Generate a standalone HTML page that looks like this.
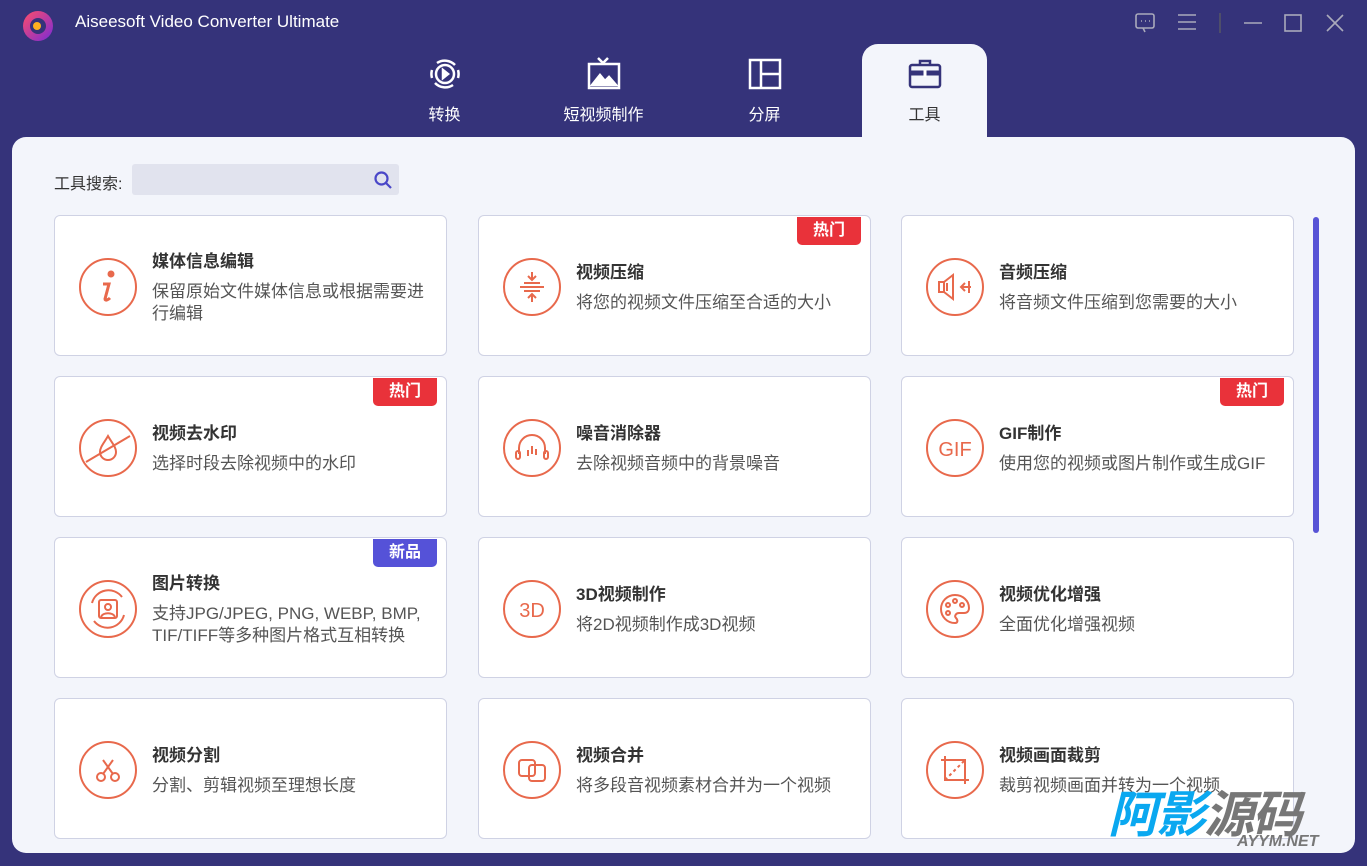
<!DOCTYPE html>
<html><head><meta charset="utf-8"><style>
*{margin:0;padding:0;box-sizing:border-box}
body{width:1367px;height:866px;background:#35337a;font-family:"Liberation Sans","Noto Sans CJK SC",sans-serif;position:relative;overflow:hidden}
.a{position:absolute}
.title{left:75px;top:12px;color:#fff;font-size:17px}
.tab{position:absolute;top:56px;width:125px;text-align:center;color:#fff;font-size:16px}
.tab svg{display:block;margin:0 auto 9px}
.panel{left:12px;top:137px;width:1343px;height:716px;background:#f3f5fb;border-radius:14px}
.acttab{left:862px;top:44px;width:125px;height:100px;background:#f3f5fb;border-radius:16px 16px 0 0}
.card{position:absolute;width:393px;height:141px;background:#fff;border:1px solid #cfd2e4;border-radius:6px}
.card svg.ic{position:absolute;left:23px;top:41px}
.txt{position:absolute;left:97px;right:18px;top:0;bottom:0;display:flex;flex-direction:column;justify-content:center}
.txt b{font-size:17px;color:#333;font-weight:bold;margin-bottom:9px}
.txt span{font-size:17px;color:#555;line-height:22px}
.badge{position:absolute;right:9px;top:1px;width:64px;height:28px;border-radius:0 0 5px 5px;color:#fff;font-weight:bold;font-size:16px;text-align:center;line-height:28px}
.hot{background:#e9323a}.new{background:#5552d8}
</style></head><body>
<svg class="a" style="left:20px;top:8px" width="36" height="36" viewBox="0 0 36 36"><defs><linearGradient id="lg" x1="0" y1="0" x2="1" y2="1"><stop offset="0" stop-color="#ff4d6a"/><stop offset="1" stop-color="#7a2bd6"/></linearGradient></defs><circle cx="18" cy="18" r="15" fill="url(#lg)"/><circle cx="18" cy="18" r="8" fill="#35337a"/><circle cx="17" cy="18" r="4" fill="#ffb020"/></svg>
<div class="a title">Aiseesoft Video Converter Ultimate</div>
<svg class="a" style="left:1134px;top:12px" width="220" height="22" viewBox="0 0 220 22" fill="none" stroke="#aab" stroke-width="1.6"><rect x="2" y="2" width="18" height="14" rx="2"/><path d="M7 9h1M11 9h1M15 9h1M9 16l2 4"/><path d="M44 3h18M44 10h18M44 17h18"/><path d="M86 1v20" stroke="#556"/><path d="M110 11h18"/><rect x="151" y="3" width="16" height="16"/><path d="M193 3l16 16M209 3l-16 16"/></svg>
<div class="a acttab"></div>
<div class="a panel"></div>
<div class="tab" style="left:382px"><svg width="36" height="36" viewBox="0 0 36 36" fill="none" stroke="#fff" stroke-width="2.5"><path d="M10 7a14 14 0 0 1 18 2M26 29a14 14 0 0 1-18-2M5 14a14 14 0 0 0 0 8M31 14a14 14 0 0 1 0 8"/><circle cx="18" cy="18" r="9"/><path d="M16 14l5 4-5 4z" fill="#fff"/></svg>转换</div>
<div class="tab" style="left:541px"><svg width="36" height="36" viewBox="0 0 36 36" fill="none" stroke="#fff" stroke-width="2.5"><path d="M12 2l5 5 5-5"/><rect x="3" y="8" width="30" height="24"/><path d="M6 29l8-10 5 6 4-4 7 8z" fill="#fff"/></svg>短视频制作</div>
<div class="tab" style="left:702px"><svg width="36" height="36" viewBox="0 0 36 36" fill="none" stroke="#fff" stroke-width="2.5"><rect x="3" y="4" width="30" height="28"/><path d="M14 4v28M14 18h19"/></svg>分屏</div>
<div class="tab" style="left:862px;color:#333"><svg width="36" height="36" viewBox="0 0 36 36" fill="none" stroke="#35337a" stroke-width="2.5"><path d="M13 9V5h10v4"/><rect x="3" y="9" width="30" height="22" rx="2"/><path d="M3 17h30" stroke-width="5"/><path d="M18 14v7" stroke="#fff" stroke-width="3"/></svg>工具</div>
<div class="a" style="left:54px;top:170px;font-size:16px;color:#333">工具搜索:</div>
<div class="a" style="left:132px;top:164px;width:267px;height:31px;background:#e1e3ee;border-radius:3px"></div>
<svg class="a" style="left:373px;top:170px" width="20" height="20" viewBox="0 0 20 20" fill="none" stroke="#4a47c8" stroke-width="2.2"><circle cx="8.5" cy="8.5" r="6"/><path d="M13 13l5 5"/></svg>
<div class="a" style="left:1313px;top:217px;width:6px;height:316px;background:#5753d6;border-radius:3px"></div>

<div class="card" style="left:54px;top:215px"><svg class="ic" width="60" height="60" viewBox="0 0 60 60" fill="none" stroke="#e8694c" stroke-width="2"><circle cx="30" cy="30" r="28"/><circle cx="33" cy="17" r="2.5" fill="#e8694c"/><path d="M25 27h6l-4 15c0 2 3 1 5-1" stroke-width="3"/></svg><div class="txt"><b>媒体信息编辑</b><span>保留原始文件媒体信息或根据需要进行编辑</span></div></div>
<div class="card" style="left:478px;top:215px"><div class="badge hot">热门</div><svg class="ic" width="60" height="60" viewBox="0 0 60 60" fill="none" stroke="#e8694c" stroke-width="2"><circle cx="30" cy="30" r="28"/><path d="M18 30h24M22 26h16M22 34h16M30 15v8M26 19l4 4 4-4M30 45v-8M26 41l4-4 4 4"/></svg><div class="txt"><b>视频压缩</b><span>将您的视频文件压缩至合适的大小</span></div></div>
<div class="card" style="left:901px;top:215px"><svg class="ic" width="60" height="60" viewBox="0 0 60 60" fill="none" stroke="#e8694c" stroke-width="2"><circle cx="30" cy="30" r="28"/><path d="M14 25h5v10h-5zM19 25l9-7v24l-9-7M22 26v8M46 30h-10M40 26l-4 4 4 4M44 24v12"/></svg><div class="txt"><b>音频压缩</b><span>将音频文件压缩到您需要的大小</span></div></div>

<div class="card" style="left:54px;top:376px"><div class="badge hot">热门</div><svg class="ic" width="60" height="60" viewBox="0 0 60 60" fill="none" stroke="#e8694c" stroke-width="2"><circle cx="30" cy="30" r="28"/><path d="M30 18c-4 7-8 11-8 16a8 8 0 0 0 16 0c0-5-4-9-8-16zM8 44L52 18"/></svg><div class="txt"><b>视频去水印</b><span>选择时段去除视频中的水印</span></div></div>
<div class="card" style="left:478px;top:376px"><svg class="ic" width="60" height="60" viewBox="0 0 60 60" fill="none" stroke="#e8694c" stroke-width="2"><circle cx="30" cy="30" r="28"/><path d="M17 36v-6a13 13 0 0 1 26 0v6"/><rect x="14" y="33" width="4" height="8" rx="2"/><rect x="42" y="33" width="4" height="8" rx="2"/><path d="M26 32v6M30 28v8M34 31v6"/></svg><div class="txt"><b>噪音消除器</b><span>去除视频音频中的背景噪音</span></div></div>
<div class="card" style="left:901px;top:376px"><div class="badge hot">热门</div><svg class="ic" width="60" height="60" viewBox="0 0 60 60" fill="none" stroke="#e8694c" stroke-width="2"><circle cx="30" cy="30" r="28"/><text x="30" y="38" text-anchor="middle" font-family="Liberation Sans" font-size="20" fill="#e8694c" stroke="none">GIF</text></svg><div class="txt"><b>GIF制作</b><span>使用您的视频或图片制作或生成GIF</span></div></div>

<div class="card" style="left:54px;top:537px"><div class="badge new">新品</div><svg class="ic" width="60" height="60" viewBox="0 0 60 60" fill="none" stroke="#e8694c" stroke-width="2"><circle cx="30" cy="30" r="28"/><path d="M14 24a17 17 0 0 1 30-6M46 36a17 17 0 0 1-30 6"/><rect x="21" y="21" width="18" height="18" rx="2"/><circle cx="30" cy="28" r="3"/><path d="M23 38c2-5 12-5 14 0"/></svg><div class="txt"><b>图片转换</b><span>支持JPG/JPEG, PNG, WEBP, BMP, TIF/TIFF等多种图片格式互相转换</span></div></div>
<div class="card" style="left:478px;top:537px"><svg class="ic" width="60" height="60" viewBox="0 0 60 60" fill="none" stroke="#e8694c" stroke-width="2"><circle cx="30" cy="30" r="28"/><text x="30" y="38" text-anchor="middle" font-family="Liberation Sans" font-size="20" fill="#e8694c" stroke="none">3D</text></svg><div class="txt"><b>3D视频制作</b><span>将2D视频制作成3D视频</span></div></div>
<div class="card" style="left:901px;top:537px"><svg class="ic" width="60" height="60" viewBox="0 0 60 60" fill="none" stroke="#e8694c" stroke-width="2"><circle cx="30" cy="30" r="28"/><path d="M30 16a14 14 0 1 0 0 28c3 0 3-3 1-5s0-5 3-5h5c4 0 5-3 5-5 0-7-6-13-14-13z"/><circle cx="23" cy="26" r="2"/><circle cx="30" cy="22" r="2"/><circle cx="37" cy="26" r="2"/><circle cx="23" cy="34" r="2"/></svg><div class="txt"><b>视频优化增强</b><span>全面优化增强视频</span></div></div>

<div class="card" style="left:54px;top:698px"><svg class="ic" width="60" height="60" viewBox="0 0 60 60" fill="none" stroke="#e8694c" stroke-width="2"><circle cx="30" cy="30" r="28"/><circle cx="23" cy="37" r="4"/><circle cx="37" cy="37" r="4"/><path d="M25 34l10-14M35 34L25 20"/></svg><div class="txt"><b>视频分割</b><span>分割、剪辑视频至理想长度</span></div></div>
<div class="card" style="left:478px;top:698px"><svg class="ic" width="60" height="60" viewBox="0 0 60 60" fill="none" stroke="#e8694c" stroke-width="2"><circle cx="30" cy="30" r="28"/><rect x="17" y="20" width="16" height="16" rx="3"/><rect x="27" y="25" width="16" height="16" rx="3"/></svg><div class="txt"><b>视频合并</b><span>将多段音视频素材合并为一个视频</span></div></div>
<div class="card" style="left:901px;top:698px"><svg class="ic" width="60" height="60" viewBox="0 0 60 60" fill="none" stroke="#e8694c" stroke-width="2"><circle cx="30" cy="30" r="28"/><path d="M20 16v24h24M16 20h24v24"/><path d="M20 40l20-20" stroke-dasharray="3 3"/></svg><div class="txt"><b>视频画面裁剪</b><span>裁剪视频画面并转为一个视频</span></div></div>

<div class="a" style="left:1108px;top:790px;font-size:50px;font-weight:bold;font-style:italic;color:#0aa8f0;letter-spacing:-2px;line-height:50px">阿影<span style="color:#777">源码</span></div>
<div class="a" style="left:1237px;top:833px;font-size:16px;font-weight:bold;font-style:italic;color:#777">AYYM.NET</div>
</body></html>
